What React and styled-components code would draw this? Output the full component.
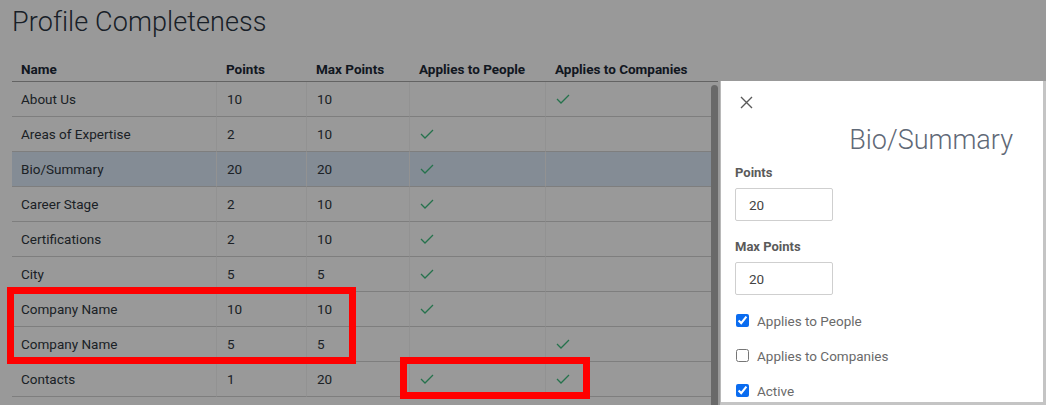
import React from "react";
import styled, { createGlobalStyle } from "styled-components";

const Global = createGlobalStyle`
  html, body { margin: 0; padding: 0; background: #fff; }
  body { font-family: Roboto, "Liberation Sans", sans-serif; color: #333; overflow: hidden; }
  * { box-sizing: border-box; }
`;

const Page = styled.div`
  position: relative;
  width: 1046px;
  height: 405px;
  padding: 5px 0 0 12px;
  overflow: hidden;
`;

const Title = styled.h1`
  margin: 0;
  font-size: 27px;
  line-height: 34px;
  font-weight: 300;
  color: #2a3442;
  letter-spacing: 0.1px;
`;

const Grid = styled.div`
  margin-top: 11px;
  width: 706px;
  display: grid;
  grid-template-columns: 204px 90px 103px 136px 173px;
`;

const HeadCell = styled.div`
  height: 32px;
  padding: 11px 0 0 ${(p) => (p.$first ? 9 : 10)}px;
  font-size: 13.5px;
  font-weight: 700;
  color: #1c2836;
  border-bottom: 1px solid #a6a6a6;
  white-space: nowrap;
`;

const Cell = styled.div`
  height: 35px;
  display: flex;
  align-items: center;
  padding-left: ${(p) => (p.$first ? 9 : 10)}px;
  font-size: 13.5px;
  color: #2f3740;
  border-bottom: 1px solid #d2d2d2;
  border-left: ${(p) => (p.$first ? "none" : "1px solid #f3f3f3")};
  background: ${(p) => (p.$selected ? "#dce9f8" : "transparent")};
  white-space: nowrap;
`;

const Scrollbar = styled.div`
  position: absolute;
  left: 711px;
  top: 85px;
  width: 7px;
  height: 330px;
  border-radius: 4px 4px 0 0;
  background: #b0b0b0;
`;

const Dim = styled.div`
  position: absolute;
  inset: 0;
  background: rgba(0, 0, 0, 0.4);
`;

const Drawer = styled.aside`
  position: absolute;
  left: 720px;
  top: 81px;
  width: 326px;
  height: 324px;
  background: #fff;
  border-left: 1px solid #b8b8b8;
  border-right: 3px solid #c4c4c4;
  border-bottom: 3px solid #c4c4c4;
  padding: 11px 30px 0 14px;
  display: flex;
  flex-direction: column;
  & > * { flex-shrink: 0; }
`;

const Close = styled.button`
  width: 20px;
  height: 20px;
  margin-left: 1px;
  padding: 0;
  border: none;
  background: none;
  display: flex;
  align-items: center;
  justify-content: center;
  cursor: pointer;
`;

const DrawerTitle = styled.h2`
  margin: 11px 0 0;
  text-align: right;
  font-size: 27px;
  line-height: 34px;
  font-weight: 300;
  color: #5f6977;
`;

const Label = styled.div`
  margin-top: ${(p) => p.$mt}px;
  font-size: 13px;
  font-weight: 700;
  color: #5a5a5a;
  line-height: 16px;
`;

const Input = styled.input`
  margin-top: 7px;
  width: 98px;
  height: 33px;
  border: 1px solid #cfcfcf;
  border-radius: 2px;
  padding: 0 0 0 13px;
  font-family: Roboto, "Liberation Sans", sans-serif;
  font-size: 13.5px;
  color: #444;
  outline: none;
`;

const CheckRow = styled.label`
  margin-top: 16px;
  height: 19px;
  display: flex;
  align-items: center;
  gap: 8px;
  font-size: 13.5px;
  color: #6a6a6a;
  cursor: pointer;
`;

const Box = styled.input`
  width: 13px;
  height: 13px;
  margin: 0 0 0 1px;
  accent-color: #0a6cf0;
`;

const Mark = styled.div`
  position: absolute;
  border: 7px solid #ff0000;
  left: ${(p) => p.$x}px;
  top: ${(p) => p.$y}px;
  width: ${(p) => p.$w}px;
  height: ${(p) => p.$h}px;
`;

const Check = () => (
  <svg width="14" height="10" viewBox="0 0 14 10">
    <polyline points="1,5 5,9 13,1" fill="none" stroke="#3fbf7f" strokeWidth="1.3" />
  </svg>
);

const rows = [
  ["About Us", 10, 10, false, true],
  ["Areas of Expertise", 2, 10, true, false],
  ["Bio/Summary", 20, 20, true, false, true],
  ["Career Stage", 2, 10, true, false],
  ["Certifications", 2, 10, true, false],
  ["City", 5, 5, true, false],
  ["Company Name", 10, 10, true, false],
  ["Company Name", 5, 5, false, true],
  ["Contacts", 1, 20, true, true],
];

export default function App() {
  return (
    <>
      <Global />
      <Page>
        <Title>Profile Completeness</Title>
        <Grid>
          <HeadCell $first>Name</HeadCell>
          <HeadCell>Points</HeadCell>
          <HeadCell>Max Points</HeadCell>
          <HeadCell>Applies to People</HeadCell>
          <HeadCell>Applies to Companies</HeadCell>
          {rows.map(([name, pts, max, people, comp, sel], i) => (
            <React.Fragment key={i}>
              <Cell $first $selected={sel}>{name}</Cell>
              <Cell $selected={sel}>{pts}</Cell>
              <Cell $selected={sel}>{max}</Cell>
              <Cell $selected={sel}>{people && <Check />}</Cell>
              <Cell $selected={sel}>{comp && <Check />}</Cell>
            </React.Fragment>
          ))}
        </Grid>
        <Scrollbar />
        <Dim />
        <Drawer>
          <Close aria-label="Close">
            <svg width="13" height="13" viewBox="0 0 13 13">
              <path d="M1 1 L12 12 M12 1 L1 12" stroke="#5a5a5a" strokeWidth="1.4" fill="none" />
            </svg>
          </Close>
          <DrawerTitle>Bio/Summary</DrawerTitle>
          <Label $mt={8}>Points</Label>
          <Input defaultValue="20" />
          <Label $mt={18}>Max Points</Label>
          <Input defaultValue="20" />
          <CheckRow>
            <Box type="checkbox" defaultChecked />
            Applies to People
          </CheckRow>
          <CheckRow>
            <Box type="checkbox" />
            Applies to Companies
          </CheckRow>
          <CheckRow>
            <Box type="checkbox" defaultChecked />
            Active
          </CheckRow>
        </Drawer>
        <Mark $x={7} $y={287} $w={349} $h={77} />
        <Mark $x={400} $y={357} $w={190} $h={42} />
      </Page>
    </>
  );
}
